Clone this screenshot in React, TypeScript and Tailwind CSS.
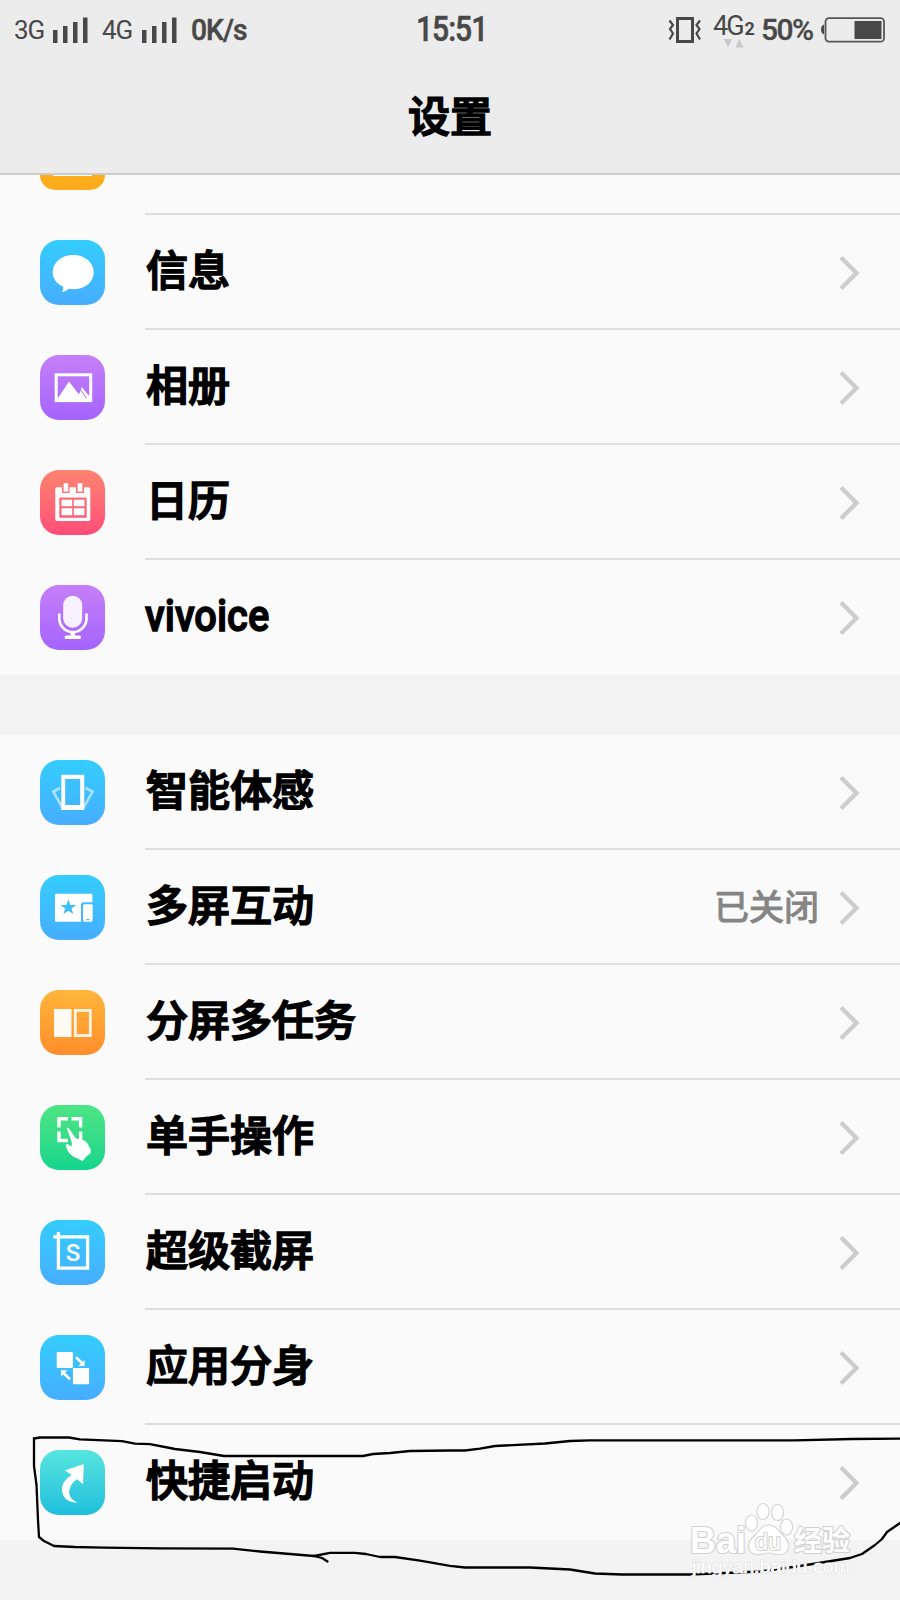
import type { ReactNode } from "react";

interface Setting {
  label: string;
  bg: string;
  icon: ReactNode;
  value?: string;
}

const BLUE = "bg-linear-to-b from-[#33cdfd] to-[#46adff]";
const PURPLE = "bg-linear-to-b from-[#c67ff8] to-[#a563fe]";

const apps: Setting[] = [
  {
    label: "信息",
    bg: BLUE,
    icon: (
      <path d="M33.2 15C45 15 53.7 22.5 53.7 32.2S45 49.3 33.2 49.3q-2.6-.4-4.2-.5Q26 51.5 22 52.2Q23.5 50 23.2 46.6C16.5 43.5 12.7 38.5 12.7 32.2C12.7 22.5 21.5 15 33.2 15Z" />
    ),
  },
  {
    label: "相册",
    bg: PURPLE,
    icon: (
      <>
        <rect x="16.2" y="19.8" width="34.5" height="25.8" fill="none" stroke="white" strokeWidth="3" />
        <path d="M17 44.5L29 26.5L39 39.5L41.7 32L51 43V46H17Z" />
        <path d="M39.5 33.5L46.5 43.2" stroke="#a96cf9" strokeWidth="1" />
      </>
    ),
  },
  {
    label: "日历",
    bg: "bg-linear-to-b from-[#fe8370] to-[#fe4c78]",
    icon: (
      <>
        <path fillRule="evenodd" d="M17 17.3H22V23H29.5V17.3H36V23H44V17.3H48.5Q50.3 17.3 50.3 19V49.3Q50.3 51 48.5 51H17Q15.3 51 15.3 49.3V19Q15.3 17.3 17 17.3ZM19.3 27.5V47.7H46.7V27.5Z" />
        <rect x="23.6" y="13.3" width="4.6" height="8.3" />
        <rect x="37.6" y="13.3" width="4.8" height="8.3" />
        <path d="M21.5 29.7H32.2V36.3H21.5ZM33.8 29.7H44.5V36.3H33.8ZM21.5 38.3H32.2V45.3H21.5ZM33.8 38.3H44.5V45.3H33.8Z" />
      </>
    ),
  },
  {
    label: "vivoice",
    bg: PURPLE,
    icon: (
      <>
        <rect x="23.2" y="10.7" width="19" height="32" rx="9.5" fillOpacity="0.9" />
        <path d="M19.3 28.5V33.5A13.6 13.6 0 0 0 46.5 33.5V28.5" fill="none" stroke="white" strokeWidth="2.6" />
        <path d="M30.5 46.5H35V50.5H39.5Q41 50.5 41 52.2T39.5 54H26Q24.6 54 24.6 52.2T26 50.5H30.5Z" />
      </>
    ),
  },
];

const features: Setting[] = [
  {
    label: "智能体感",
    bg: BLUE,
    icon: (
      <>
        <path d="M20 28L13.3 31.5L22.5 48M45.5 28L52.5 31.5L43.5 48" fill="none" stroke="white" strokeOpacity="0.55" strokeWidth="2.6" />
        <path fillRule="evenodd" d="M21.3 14.7H44.3V50H21.3ZM25.2 19V45H40.2V19Z" />
      </>
    ),
  },
  {
    label: "多屏互动",
    bg: BLUE,
    value: "已关闭",
    icon: (
      <>
        <path
          fillRule="evenodd"
          d="M16 18.7H51.3Q52.4 18.7 52.4 20V27.2H43.3Q41 27.2 41 29.5V46.7H16Q15 46.7 15 45.5V20Q15 18.7 16 18.7ZM28.3 24.3L26.4 29.9H20.5L25.2 33.4L23.4 39.1L28.3 35.7L33.3 39.1L31.5 33.4L36.2 29.9H30.3Z"
        />
        <path fillRule="evenodd" d="M44.5 29.2H51.3Q52.7 29.2 52.7 30.6V45.3Q52.7 46.7 51.3 46.7H44.5Q43 46.7 43 45.3V30.6Q43 29.2 44.5 29.2ZM46.3 44V45.2H49.3V44Z" />
      </>
    ),
  },
  {
    label: "分屏多任务",
    bg: "bg-linear-to-b from-[#ffb63a] to-[#ff8d2c]",
    icon: (
      <>
        <rect x="14" y="19" width="17.5" height="28" fillOpacity="0.95" />
        <rect x="35.3" y="20.4" width="15" height="25.2" fill="none" stroke="#fff6e8" strokeWidth="2.8" />
      </>
    ),
  },
  {
    label: "单手操作",
    bg: "bg-linear-to-b from-[#4ce584] to-[#0fd58b]",
    icon: (
      <>
        <path d="M19 22.5V13.7H28M31.5 13.7H40.6V22.5M19 26.5V35.5H28M40.6 26.5V35.5H36" fill="none" stroke="white" strokeWidth="3.4" />
        <path d="M26.8 23.3Q27.8 22 29 23.5L35.5 33Q37 35 39.5 34L44 35.2Q48 37.5 49.5 42Q51.5 45.5 50.8 48Q47 50 43.3 55.3Q42.2 56.3 40.5 55L33 51.5Q26.5 46.5 26 40.5Q26.6 37.8 29 40L31.8 41.5V37.5Q29 29 26.8 23.3Z" />
      </>
    ),
  },
  {
    label: "超级截屏",
    bg: BLUE,
    icon: (
      <>
        <path d="M13.3 16.8H47.6V48.2H18.4V12" fill="none" stroke="white" strokeWidth="3.3" />
        <text x="33" y="41" textAnchor="middle" fontFamily="Roboto, sans-serif" fontWeight="500" fontSize="24">
          S
        </text>
      </>
    ),
  },
  {
    label: "应用分身",
    bg: BLUE,
    icon: (
      <>
        <rect x="16.7" y="16.9" width="16.2" height="16.2" rx="1" />
        <rect x="32.9" y="33" width="16.2" height="16.2" rx="1" />
        <path d="M36 22.2L42.5 28.5M30 44.2L23.5 38" stroke="white" strokeWidth="2.6" />
        <path d="M44.6 25V31H38.3ZM21 41.5V35.2H27.5Z" />
      </>
    ),
  },
  {
    label: "快捷启动",
    bg: "bg-linear-to-b from-[#56e5df] to-[#1cbfdc]",
    icon: (
      <path d="M43.8 14L24.7 20.5L31.8 25C25 29 22 34 22 39.5C22 47.5 28.5 53.5 38 52.5C32.5 50.5 28.8 46.5 29.2 41.5C29.8 36 33 31.5 37.2 29.2L43 34.3Z" />
    ),
  },
];

function Chevron() {
  return (
    <svg className="mt-0.5 mr-10 h-9 w-[21px] shrink-0" viewBox="0 0 21 36" fill="none" stroke="#cdcdcd" strokeWidth="4.4">
      <path d="M2 2.5L17.5 18L2 33.5" />
    </svg>
  );
}

function Row({ item, last }: { item: Setting; last: boolean }) {
  return (
    <li className="flex h-[115px] items-center pl-10">
      <div className={`size-[65px] shrink-0 rounded-[19px] ${item.bg}`}>
        <svg viewBox="0 0 65 65" className="size-full" fill="white">
          {item.icon}
        </svg>
      </div>
      <div className={`ml-10 flex h-full grow items-center border-b-2 ${last ? "border-transparent" : "border-[#dedede]"}`}>
        {item.label === "vivoice" ? (
          <span className="-mt-0.5 origin-left scale-x-[0.885] font-[Roboto,sans-serif] text-[45px] font-medium [-webkit-text-stroke:1.4px_black]">
            {item.label}
          </span>
        ) : (
          <span className="-mt-2 ml-px text-[42px] font-medium whitespace-nowrap [-webkit-text-stroke:1.7px_black]">{item.label}</span>
        )}
        <div className="ml-auto flex items-center">
          {item.value && <span className="-mt-1 mr-5 text-[35px] text-[#858585] [-webkit-text-stroke:1.2px_#858585]">{item.value}</span>}
          <Chevron />
        </div>
      </div>
    </li>
  );
}

function List({ items }: { items: Setting[] }) {
  return (
    <ul className="bg-[#fafafa]">
      {items.map((item, i) => (
        <Row key={item.label} item={item} last={i === items.length - 1} />
      ))}
    </ul>
  );
}

function Signal() {
  return (
    <svg width="35" height="26" viewBox="0 0 35 26" fill="#484848" className="shrink-0">
      <path d="M0 13H4.5V26H0ZM10 9H14.5V26H10ZM20 5H24.5V26H20ZM30 .5H34.5V26H30Z" />
    </svg>
  );
}

function StatusBar() {
  return (
    <div className="flex h-[60px] items-center font-[Roboto,sans-serif] leading-none text-[#484848]">
      <div className="flex w-[416px] items-center pl-[14px]">
        <span className="w-[39px] text-[26px] tracking-[-1px]">3G</span>
        <Signal />
        <span className="ml-[14px] w-[40px] text-[26px] tracking-[-1px]">4G</span>
        <Signal />
        <span className="ml-[14px] origin-left scale-x-[0.94] text-[30px] font-medium tracking-[-1px] [-webkit-text-stroke:0.5px_#484848]">0K/s</span>
      </div>
      <div className="w-[252px]">
        <span className="inline-block origin-left -translate-y-px scale-x-[0.86] text-[35px] font-medium tracking-[-1.2px] [-webkit-text-stroke:0.5px_#484848]">15:51</span>
      </div>
      <svg width="34" height="28" viewBox="0 0 34 28" fill="none" stroke="#484848" strokeWidth="2.2">
        <rect x="9.5" y="2.5" width="15" height="23" strokeWidth="3" />
        <path d="M1.5 4.5L5 9L2 13L5 17.5L1.5 23.5M32 4.5L28.5 9L31.5 13L28.5 17.5L32 23.5" />
      </svg>
      <div className="ml-[11px] flex w-[48px] flex-col">
        <div className="mt-px flex items-baseline">
          <span className="text-[27px] tracking-[-2px]">4G</span>
          <span className="ml-0.5 text-[18px] font-bold">2</span>
        </div>
        <svg width="20" height="9" viewBox="0 0 20 9" fill="#c9c9c9" className="-mt-px ml-[11px]">
          <path d="M0 0H8L4 8.5ZM11.5 8.5H19.5L15.5 0Z" />
        </svg>
      </div>
      <span className="w-[59px] text-[30px] font-medium tracking-[-1.5px] [-webkit-text-stroke:0.3px_#484848]">50%</span>
      <svg width="66" height="28" viewBox="0 0 66 28">
        <path d="M4 8.5V18.5Q1 17.5 1 13.5T4 8.5Z" fill="#484848" />
        <rect x="5.5" y="2.2" width="58.5" height="23.5" rx="3.5" fill="none" stroke="#555" strokeWidth="1.8" />
        <rect x="34.5" y="5" width="27" height="18" fill="#484848" />
      </svg>
    </div>
  );
}

// hand-drawn circle around the last row
function Scribble() {
  return (
    <svg
      className="pointer-events-none absolute inset-x-0 top-[1420px] h-[180px] w-[900px]"
      viewBox="0 1420 900 180"
      fill="none"
      stroke="black"
      strokeWidth="2.3"
      strokeLinejoin="round"
      strokeLinecap="round"
    >
      <path d="M34 1438.5L40 1437.5H69L80 1439.3L122 1441.2L135 1443.7L150 1444.2L175 1449L200 1452L224 1456H363L373 1454L390 1453L410 1451L450 1450.5H465L480 1448.7L495 1446L545 1443.5L570 1441L590 1440.3H795L852 1439L900 1438.7" />
      <path d="M34 1438.5V1466L36.5 1485L38 1520L39 1537L44 1541L54 1546L75 1547L104 1547.6L160 1548.3L233 1548.7L260 1551.5L290 1554L314 1556L322 1558L327.5 1561.5" />
      <path d="M314 1556L330 1552.8H355L366 1554L380 1557H395L420 1560.7L450 1565.8L465 1567.5H530L570 1569.5L595 1573.5L622 1574.5H690L760 1571.5L800 1566L825 1562L850 1558L862 1554L875 1545L882 1539L887 1532L900 1523" />
    </svg>
  );
}

function Watermark() {
  return (
    <svg
      className="pointer-events-none absolute top-[1495px] left-[685px] h-[90px] w-[175px] font-[Liberation_Sans,Noto_Sans_CJK_SC,sans-serif]"
      viewBox="685 1495 175 90"
      fill="white"
      stroke="#d2d2d2"
      strokeWidth="2.2"
      strokeLinejoin="round"
      paintOrder="stroke"
    >
      <text x="690" y="1553" fontSize="36" fontWeight="700" textLength="56" lengthAdjust="spacingAndGlyphs">Bai</text>
      <ellipse cx="751.5" cy="1523" rx="5.5" ry="7.5" />
      <ellipse cx="763" cy="1511.5" rx="5.5" ry="7.5" />
      <ellipse cx="777.5" cy="1512.5" rx="5.5" ry="7.5" />
      <ellipse cx="786.5" cy="1527" rx="5.5" ry="7.5" />
      <path d="M768.5 1525.5C775 1525.5 778 1531 783 1536C791 1543 790 1554 779 1554C773 1554 771 1552.5 768 1552.5S762 1554.5 757 1554C747 1553 747 1542 755 1536C760 1531 762 1525.5 768.5 1525.5Z" />
      <text x="755" y="1550" fontSize="24" textLength="26" lengthAdjust="spacingAndGlyphs">du</text>
      <text x="794" y="1551" fontSize="28" fontWeight="700" textLength="56" lengthAdjust="spacingAndGlyphs">经验</text>
      <text x="692" y="1573" fontSize="18" stroke="#dedede" strokeWidth="1.2" textLength="158" lengthAdjust="spacingAndGlyphs">jingyan.baidu.com</text>
    </svg>
  );
}

export default function App() {
  return (
    <div className="relative h-[1600px] w-[900px] overflow-hidden bg-[#f3f3f3] font-[Noto_Sans_CJK_SC,sans-serif] leading-none text-black">
      <header className="h-[175px] border-b-2 border-[#cbcbcb] bg-[#ececec]">
        <StatusBar />
        <h1 className="pt-[33px] text-center text-[42px] font-medium [-webkit-text-stroke:1.7px_black]">设置</h1>
      </header>
      {/* bottom edge of the row scrolled under the header */}
      <div className="h-10 bg-[#fafafa] pl-10">
        <div className="flex h-[38px]">
          <div className="flex h-[15px] w-[65px] justify-center rounded-b-[18px] bg-[#feac1c]">
            <div className="h-px w-[39px] bg-white" />
          </div>
        </div>
        <div className="ml-[105px] h-0.5 bg-[#dedede]" />
      </div>
      <List items={apps} />
      <div className="h-[60px]" />
      <List items={features} />
      <Scribble />
      <Watermark />
    </div>
  );
}
